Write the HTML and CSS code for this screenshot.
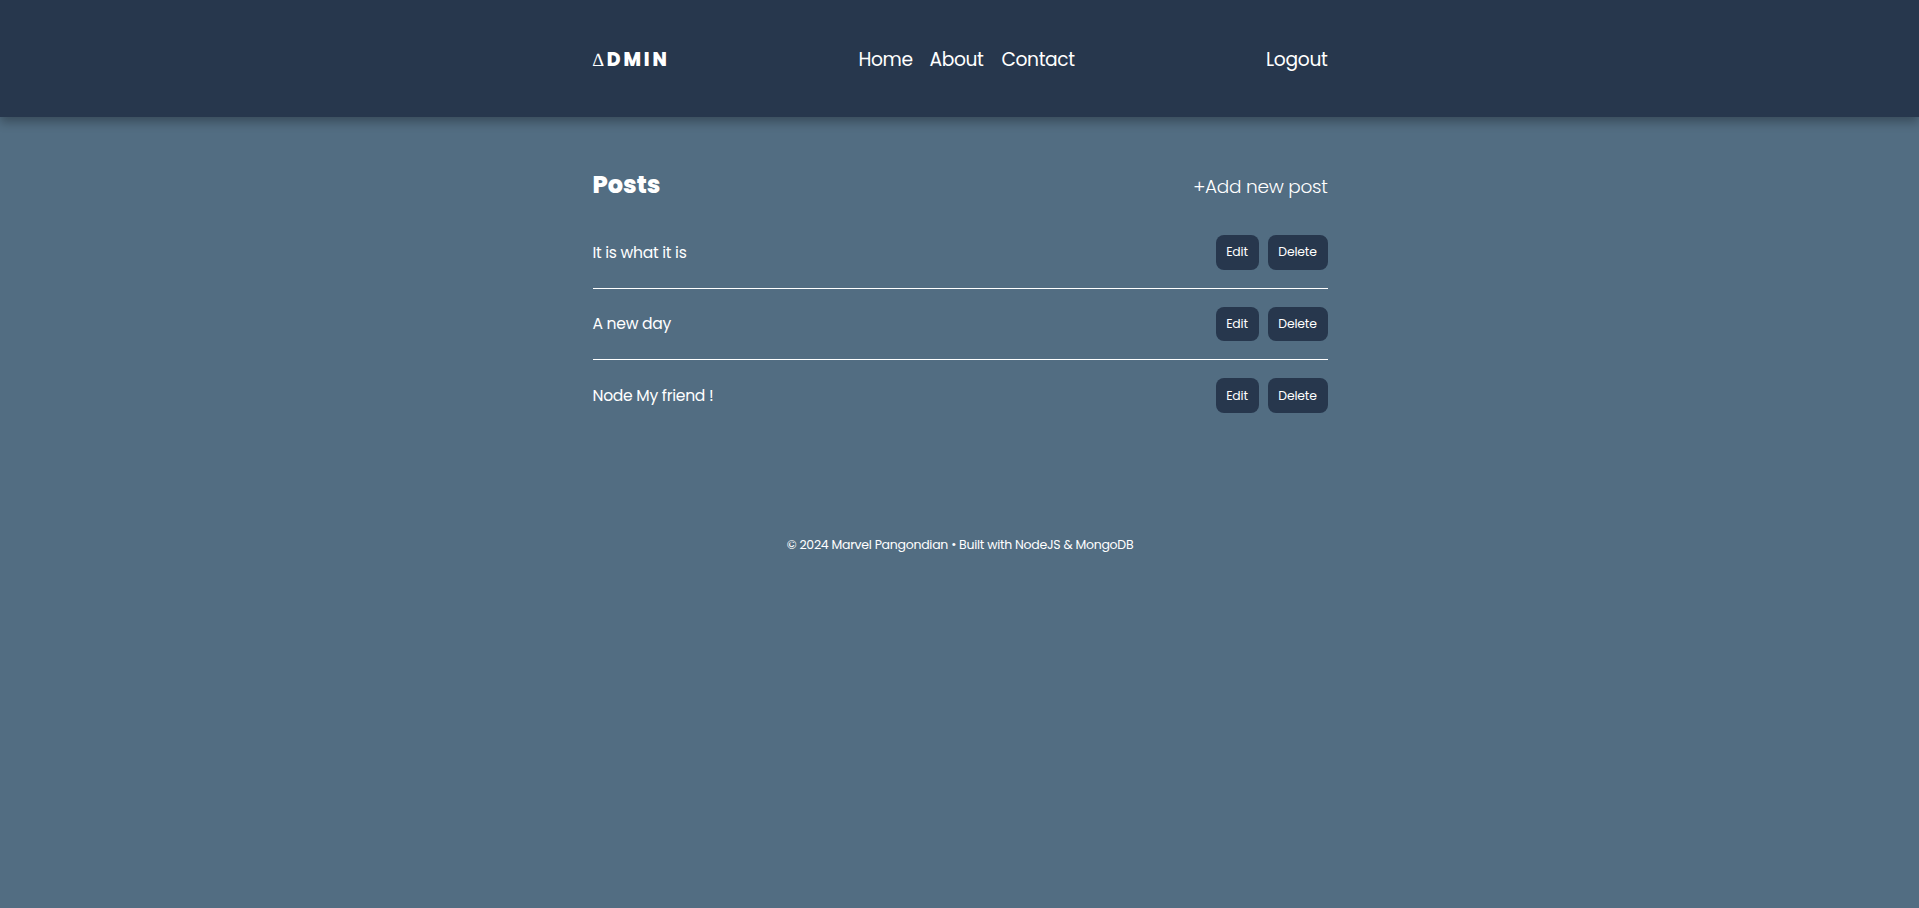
FILE: index.html
```html
<!DOCTYPE html>
<html lang="en">
<head>
<meta charset="utf-8">
<title>Admin</title>
<link rel="stylesheet" href="styles.css">
</head>
<body>
<header class="header">
  <div class="container header-inner">
    <a class="logo"><span class="delta">∆</span>DMIN</a>
    <nav class="nav">
      <a class="home">Home</a>
      <a class="about">About</a>
      <a class="contact">Contact</a>
    </nav>
    <a class="logout">Logout</a>
  </div>
</header>
<main class="container">
  <div class="title-row">
    <h1>Posts</h1>
    <a class="add">+Add new post</a>
  </div>
  <ul class="posts">
    <li class="post"><span class="name">It is what it is</span><div class="actions"><a class="btn edit">Edit</a><a class="btn delete">Delete</a></div></li>
    <li class="post"><span class="name">A new day</span><div class="actions"><a class="btn edit">Edit</a><a class="btn delete">Delete</a></div></li>
    <li class="post"><span class="name">Node My friend !</span><div class="actions"><a class="btn edit">Edit</a><a class="btn delete">Delete</a></div></li>
  </ul>
</main>
<footer class="footer">© 2024 Marvel Pangondian • Built with NodeJS &amp; MongoDB</footer>
</body>
</html>
```
FILE: styles.css
```css
* { box-sizing: border-box; }
body {
  margin: 0;
  min-height: 100vh;
  background: #526d82;
  color: #fff;
  font: 400 16px/24px Poppins, Inter, sans-serif;
}
.container { width: 736px; margin: 0 auto; padding-left: 1px; }
.header { height: 117px; background: #27374d; box-shadow: 0 5px 10px rgba(0, 0, 0, 0.3); }
.header-inner { height: 117px; padding-top: 2px; display: grid; grid-template-columns: 266px 1fr auto; align-items: center; }
.logo { font-size: 18.8px; font-weight: 800; letter-spacing: 2.8px; white-space: nowrap; }
.delta { font-family: "Liberation Serif", serif; font-weight: 400; font-size: 18.5px; letter-spacing: 3px; }
.nav { display: flex; font-size: 18.7px; letter-spacing: -0.4px; }
.home { width: 71px; }
.about { width: 72px; }
.logout { font-size: 18.7px; letter-spacing: -0.33px; }
.title-row { height: 100px; padding-top: 50px; display: flex; justify-content: space-between; }
h1 { margin: 0; font-size: 24px; line-height: 36px; font-weight: 800; }
.add { font-size: 18.5px; line-height: 40px; font-weight: 300; letter-spacing: -0.28px; }
.posts { list-style: none; margin: 0; padding: 0; }
.post { height: 71.6px; padding: 18px 0; display: flex; align-items: center; justify-content: space-between; border-bottom: 1px solid #fff; }
.post:last-child { border-bottom-color: transparent; }
.name { padding-top: 1px; font-size: 15.6px; letter-spacing: -0.29px; }
.actions { display: flex; gap: 9px; }
.btn { height: 34.6px; display: flex; align-items: center; justify-content: center; background: #27374d; border-radius: 8px; font-size: 12.4px; letter-spacing: -0.15px; }
.edit { width: 43px; }
.delete { width: 60px; }
.post:last-child .btn { padding-top: 1px; }
.footer { margin-top: 101px; padding-left: 1px; text-align: center; font-size: 12.5px; letter-spacing: -0.27px; }
```
